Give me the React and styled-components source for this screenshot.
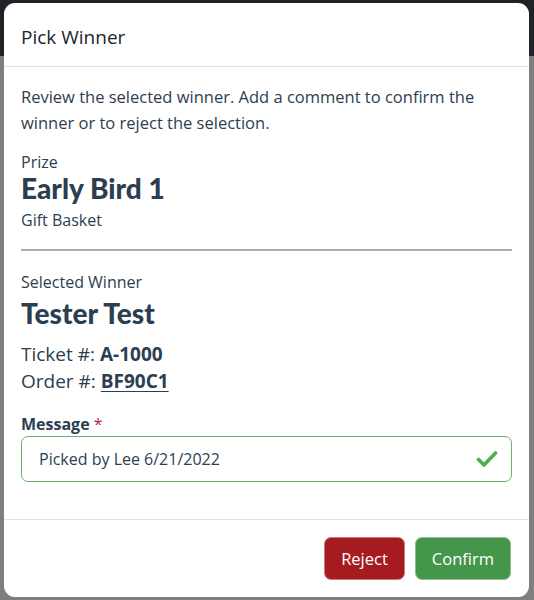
import React from "react";
import styled, { createGlobalStyle } from "styled-components";

const Global = createGlobalStyle`
  html, body { margin: 0; padding: 0; }
  body { font-family: "Open Sans", "Noto Sans", sans-serif; }
  * { box-sizing: border-box; }
`;

const Backdrop = styled.div`
  width: 534px;
  height: 600px;
  overflow: hidden;
  background: linear-gradient(#1f2226 0, #1f2226 56px, #7f7f7f 56px, #7f7f7f 100%);
  padding: 3px 5px 3px 4px;
  display: flex;
`;

const Modal = styled.div`
  flex: 1;
  background: #fff;
  border-radius: 11px;
  display: flex;
  flex-direction: column;
  overflow: hidden;
`;

const Header = styled.div`
  height: 64px;
  display: flex;
  align-items: center;
  padding: 5px 17px 0;
  border-bottom: 1px solid #dee2e6;
`;

const Title = styled.h5`
  margin: 0;
  font-size: 19px;
  font-weight: 400;
  color: #212529;
`;

const Body = styled.div`
  flex: 1;
  padding: 17px 17px 0;
  color: #2c3e50;
`;

const Intro = styled.p`
  margin: 0 0 16px;
  font-size: 16.5px;
  line-height: 26px;
`;

const Label = styled.div`
  font-size: 16px;
  line-height: 20px;
`;

const BigName = styled.div`
  font-family: "Lato", sans-serif;
  font-weight: 900;
  font-size: 28px;
  line-height: 32px;
  color: #2c3e50;
  margin-top: ${p => p.$top || 0}px;
`;

const Sub = styled.div`
  font-size: 16px;
  line-height: 22px;
  margin-top: 5px;
`;

const Rule = styled.hr`
  margin: 18px 0 21px;
  border: 0;
  border-top: 2px solid #adadad;
`;

const Details = styled.div`
  margin-top: 12px;
  font-size: 19px;
  line-height: 27px;
`;

const Strong = styled.strong`
  font-weight: 700;
`;

const Link = styled.a`
  font-weight: 700;
  color: #2c3e50;
  text-decoration: underline;
  text-underline-offset: 3px;
`;

const Field = styled.div`
  margin-top: 18px;
  display: flex;
  flex-direction: column;
  gap: 1px;
`;

const FieldLabel = styled.label`
  font-size: 16px;
  font-weight: 700;
  color: #2c3e50;
  line-height: 22px;
`;

const Req = styled.span`
  color: #b02a37;
  font-weight: 400;
`;

const InputBox = styled.div`
  height: 46px;
  border: 1px solid #66b36a;
  border-radius: 7px;
  display: flex;
  align-items: center;
  justify-content: space-between;
  padding: 0 13px 0 17px;
`;

const InputText = styled.span`
  font-size: 16px;
  color: #2c3e50;
`;

const Footer = styled.div`
  border-top: 1px solid #dee2e6;
  padding: 17px 18px 17px;
  display: flex;
  justify-content: flex-end;
  gap: 10px;
`;

const Button = styled.button`
  height: 43px;
  padding: 0 ${p => p.$pad}px;
  border: 1px solid ${p => p.$border};
  border-radius: 7px;
  background: ${p => p.$bg};
  color: #fff;
  font-family: "Open Sans", sans-serif;
  font-size: 16.5px;
`;

const Check = () => (
  <svg width="22" height="18" viewBox="0 0 22 18">
    <path d="M2.5 9.5 L8 15 L19.5 3" fill="none" stroke="#4caf50" strokeWidth="3.6" strokeLinecap="round" strokeLinejoin="round" />
  </svg>
);

export default function App() {
  return (
    <>
      <Global />
      <Backdrop>
        <Modal>
          <Header>
            <Title>Pick Winner</Title>
          </Header>
          <Body>
            <Intro>
              Review the selected winner. Add a comment to confirm the winner or to reject the selection.
            </Intro>
            <Label>Prize</Label>
            <BigName>Early Bird 1</BigName>
            <Sub>Gift Basket</Sub>
            <Rule />
            <Label>Selected Winner</Label>
            <BigName $top={5}>Tester Test</BigName>
            <Details>
              <div>Ticket #: <Strong>A-1000</Strong></div>
              <div>Order #: <Link href="#">BF90C1</Link></div>
            </Details>
            <Field>
              <FieldLabel>Message <Req>*</Req></FieldLabel>
              <InputBox>
                <InputText>Picked by Lee 6/21/2022</InputText>
                <Check />
              </InputBox>
            </Field>
          </Body>
          <Footer>
            <Button $bg="#a61b1f" $border="#c9797b" $pad={16}>Reject</Button>
            <Button $bg="#43964a" $border="#8fbf93" $pad={16}>Confirm</Button>
          </Footer>
        </Modal>
      </Backdrop>
    </>
  );
}
